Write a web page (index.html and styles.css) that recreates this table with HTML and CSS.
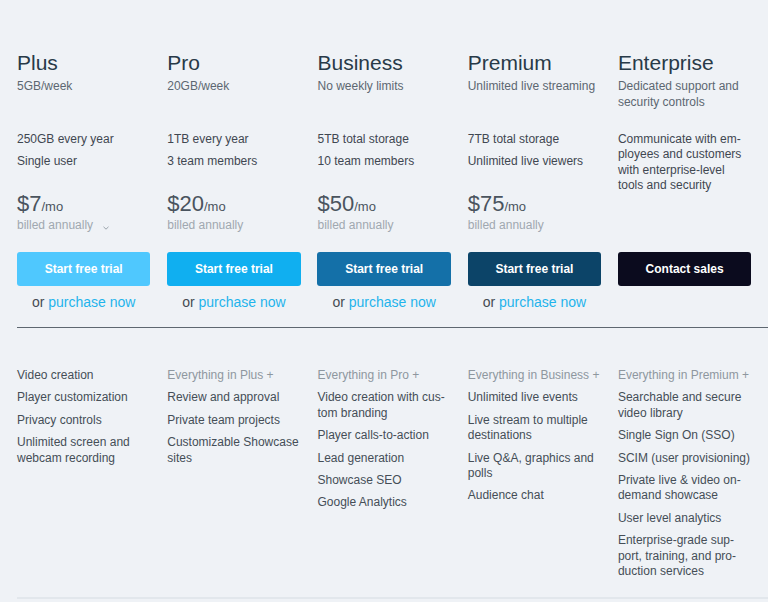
FILE: index.html
```html
<!DOCTYPE html>
<html lang="en">
<head>
<meta charset="utf-8">
<title>Plans</title>
<link rel="stylesheet" href="styles.css">
</head>
<body>
<main class="pricing">
  <section class="plans">
    <div class="plan">
      <div class="info">
        <div class="head">
          <h2 class="name">Plus</h2>
          <p class="tag">5GB/week</p>
        </div>
        <ul class="highlights"><li>250GB every year</li><li>Single user</li></ul>
        <div class="price"><span class="amount">$7</span><span class="per">/mo</span></div>
        <div class="billed">billed annually<svg class="chev" width="6" height="4" viewBox="0 0 6 4"><polyline points="0.5,0.8 3,3.2 5.5,0.8" fill="none" stroke="#9aa3ab" stroke-width="1"/></svg></div>
      </div>
      <a class="btn btn-plus" href="#">Start free trial</a>
      <p class="or">or <a href="#">purchase now</a></p>
    </div>
    <div class="plan">
      <div class="info">
        <div class="head">
          <h2 class="name">Pro</h2>
          <p class="tag">20GB/week</p>
        </div>
        <ul class="highlights"><li>1TB every year</li><li>3 team members</li></ul>
        <div class="price"><span class="amount">$20</span><span class="per">/mo</span></div>
        <div class="billed">billed annually</div>
      </div>
      <a class="btn btn-pro" href="#">Start free trial</a>
      <p class="or">or <a href="#">purchase now</a></p>
    </div>
    <div class="plan">
      <div class="info">
        <div class="head">
          <h2 class="name">Business</h2>
          <p class="tag">No weekly limits</p>
        </div>
        <ul class="highlights"><li>5TB total storage</li><li>10 team members</li></ul>
        <div class="price"><span class="amount">$50</span><span class="per">/mo</span></div>
        <div class="billed">billed annually</div>
      </div>
      <a class="btn btn-business" href="#">Start free trial</a>
      <p class="or">or <a href="#">purchase now</a></p>
    </div>
    <div class="plan">
      <div class="info">
        <div class="head">
          <h2 class="name">Premium</h2>
          <p class="tag">Unlimited live streaming</p>
        </div>
        <ul class="highlights"><li>7TB total storage</li><li>Unlimited live viewers</li></ul>
        <div class="price"><span class="amount">$75</span><span class="per">/mo</span></div>
        <div class="billed">billed annually</div>
      </div>
      <a class="btn btn-premium" href="#">Start free trial</a>
      <p class="or">or <a href="#">purchase now</a></p>
    </div>
    <div class="plan">
      <div class="info">
        <div class="head">
          <h2 class="name">Enterprise</h2>
          <p class="tag">Dedicated support and security controls</p>
        </div>
        <p class="blurb">Communicate with em&shy;ployees and customers with enterprise-level tools and security</p>
      </div>
      <a class="btn btn-enterprise" href="#">Contact sales</a>
    </div>
  </section>

  <hr class="divider">

  <section class="features">
    <ul class="flist">
      <li>Video creation</li>
      <li>Player customization</li>
      <li>Privacy controls</li>
      <li>Unlimited screen and webcam recording</li>
    </ul>
    <ul class="flist">
      <li class="inherit">Everything in Plus +</li>
      <li>Review and approval</li>
      <li>Private team projects</li>
      <li>Customizable Showcase sites</li>
    </ul>
    <ul class="flist">
      <li class="inherit">Everything in Pro +</li>
      <li>Video creation with cus&shy;tom branding</li>
      <li>Player calls-to-action</li>
      <li>Lead generation</li>
      <li>Showcase SEO</li>
      <li>Google Analytics</li>
    </ul>
    <ul class="flist">
      <li class="inherit">Everything in Business +</li>
      <li>Unlimited live events</li>
      <li>Live stream to multiple destinations</li>
      <li>Live Q&amp;A, graphics and polls</li>
      <li>Audience chat</li>
    </ul>
    <ul class="flist">
      <li class="inherit">Everything in Premium +</li>
      <li>Searchable and secure video library</li>
      <li>Single Sign On (SSO)</li>
      <li>SCIM (user provisioning)</li>
      <li>Private live &amp; video on-demand showcase</li>
      <li>User level analytics</li>
      <li>Enterprise-grade sup&shy;port, training, and pro&shy;duction services</li>
    </ul>
  </section>

  <div class="footline"></div>
</main>
</body>
</html>
```

FILE: styles.css
```css
* { box-sizing: border-box; }

html, body {
  margin: 0;
  padding: 0;
  background: #eff2f6;
  overflow: hidden;
}

body {
  font-family: "Liberation Sans", Arial, sans-serif;
  font-size: 12px;
  color: #3f4851;
}

.pricing {
  padding: 50px 0 0 17px;
}

.plans,
.features {
  display: grid;
  grid-template-columns: repeat(5, 133.4px);
  column-gap: 16.85px;
}

.plan {
  display: flex;
  flex-direction: column;
}

.info {
  height: 202px;
}

.head {
  min-height: 82px;
}

.name {
  margin: 0;
  font-size: 21px;
  font-weight: normal;
  line-height: 25.2px;
  color: #283a48;
}

.tag {
  margin: 2.6px 0 0;
  font-size: 12px;
  line-height: 16px;
  color: #5c6771;
}

.highlights {
  list-style: none;
  margin: 0;
  padding: 0;
  min-height: 61.4px;
  display: flex;
  flex-direction: column;
  gap: 6.4px;
  line-height: 15.6px;
  color: #3f4751;
}

.blurb {
  margin: 0;
  line-height: 15.4px;
  color: #3f4751;
}

.price {
  line-height: 22px;
  color: #4a545e;
  white-space: nowrap;
}

.amount {
  font-size: 22px;
}

.per {
  font-size: 13px;
}

.billed {
  line-height: 15.6px;
  color: #a0a8b0;
  display: flex;
  align-items: center;
}

.chev {
  margin: 3px 0 0 10px;
}

.btn {
  display: flex;
  align-items: center;
  justify-content: center;
  height: 34px;
  border-radius: 3px;
  font-weight: bold;
  font-size: 12px;
  color: #ffffff;
  text-decoration: none;
}

.btn-plus { background: #4fc8fe; }
.btn-pro { background: #10aff0; }
.btn-business { background: #1470a8; }
.btn-premium { background: #0c4468; }
.btn-enterprise { background: #0b0b1e; }

.or {
  margin: 7px 0 0;
  font-size: 14px;
  line-height: 18px;
  text-align: center;
  color: #444b52;
}

.or a {
  color: #1fb4ec;
  text-decoration: none;
}

.divider {
  margin: 16px 0 0;
  border: 0;
  height: 1px;
  background: #5e6770;
}

.features {
  margin-top: 40px;
}

.flist {
  list-style: none;
  margin: 0;
  padding: 0;
  display: flex;
  flex-direction: column;
  gap: 7px;
  line-height: 15.4px;
  color: #454e57;
}

.flist .inherit {
  color: #8e979f;
}

.footline {
  margin-top: 18px;
  height: 2px;
  background: #e2e7ec;
}
```
